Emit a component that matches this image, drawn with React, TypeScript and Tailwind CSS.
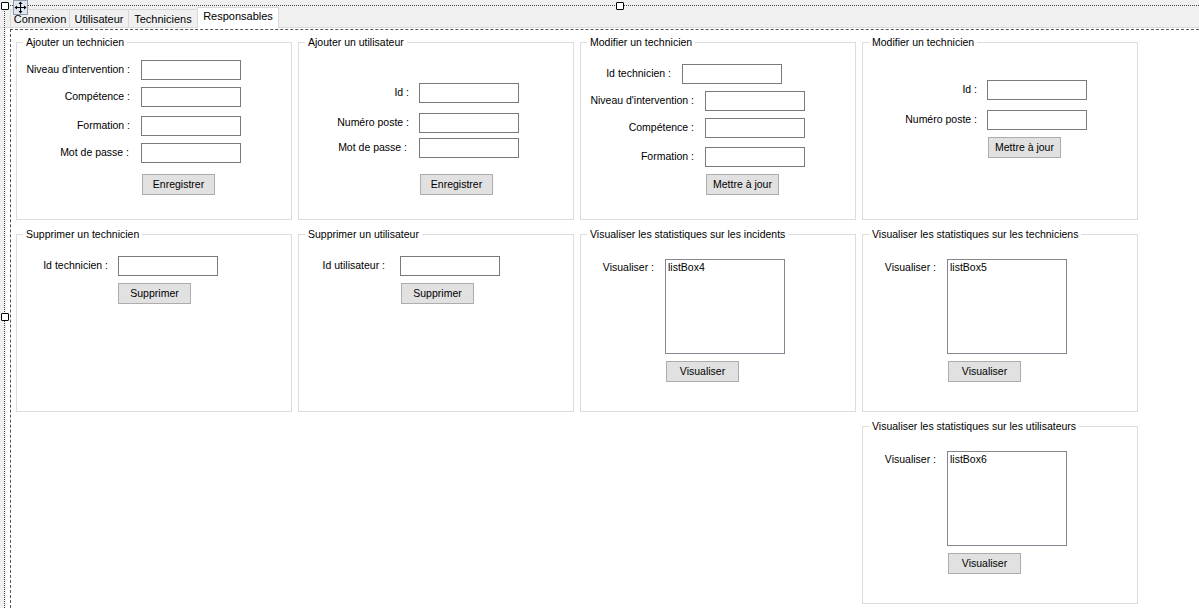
import React from 'react';

type GroupProps = { title: string; className?: string; children?: React.ReactNode };

const Group: React.FC<GroupProps> = ({ title, className = '', children }) => (
  <div className={`relative flex h-[178px] flex-col items-start border border-[#dcdcdc] ${className}`}>
    <span className="absolute -top-[7px] left-[6px] bg-white px-[3px] leading-[13px] whitespace-nowrap">{title}</span>
    {children}
  </div>
);

type FieldProps = { label: string; lw: string; gap: string; mt: string };

const Field: React.FC<FieldProps> = ({ label, lw, gap, mt }) => (
  <div className={`flex items-center ${mt}`}>
    <span className={`shrink-0 text-right whitespace-nowrap ${lw}`}>{label}</span>
    <div className={`h-[20px] w-[100px] shrink-0 border border-[#7a7a7a] bg-white ${gap}`} />
  </div>
);

const Btn: React.FC<{ className?: string; children: React.ReactNode }> = ({ className = '', children }) => (
  <button
    type="button"
    className={`flex h-[21px] w-[73px] items-center justify-center border border-[#adadad] bg-[#e1e1e1] leading-[13px] ${className}`}
  >
    {children}
  </button>
);

const ListView: React.FC<{ name: string }> = ({ name }) => (
  <>
    <div className="mt-[24px] flex items-start">
      <span className="mt-[1px] w-[73px] shrink-0 text-right whitespace-nowrap">Visualiser :</span>
      <div className="ml-[11px] h-[95px] w-[120px] border border-[#828790] bg-white px-[2px] pt-[1px] leading-[13px]">
        {name}
      </div>
    </div>
    <Btn className="ml-[85px] mt-[7px]">Visualiser</Btn>
  </>
);

const tabs = [
  { name: 'Connexion', w: 'w-[60px]' },
  { name: 'Utilisateur', w: 'w-[60px] -ml-px' },
  { name: 'Techniciens', w: 'w-[70px] -ml-px' },
];

const MoveGlyph = () => (
  <svg width="15" height="15" viewBox="0 0 15 15" className="absolute left-[13px] top-0">
    <rect x="0.5" y="0.5" width="14" height="14" fill="#dfe6ef" stroke="#8e9aab" />
    <path d="M7.5 2.5V12.5M2.5 7.5H12.5" stroke="#000" strokeWidth="1" />
    <path d="M7.5 1.5L9.5 4H5.5Z M7.5 13.5L9.5 11H5.5Z M1.5 7.5L4 5.5V9.5Z M13.5 7.5L11 5.5V9.5Z" fill="#000" />
  </svg>
);

const Handle: React.FC<{ className: string }> = ({ className }) => (
  <div className={`absolute h-[8px] w-[8px] rounded-[1px] border border-black bg-white ${className}`} />
);

export default function App() {
  return (
    <div className="relative flex h-[608px] w-[1199px] flex-col overflow-hidden bg-white font-['Liberation_Sans',Arial,sans-serif] text-[10.5px] text-black">
      {/* tab strip */}
      <div className="flex h-[28px] shrink-0 items-end border-b border-[#d9d9d9] bg-[#f0f0f0] pl-[10px] text-[11px]">
        {tabs.map((t) => (
          <div
            key={t.name}
            className={`flex h-[18px] items-center justify-center border border-b-0 border-[#d9d9d9] bg-[#f0f0f0] pt-[1px] leading-[13px] ${t.w}`}
          >
            {t.name}
          </div>
        ))}
        <div className="relative z-10 -mb-px -ml-px flex h-[21px] w-[82px] items-start justify-center border border-b-0 border-[#d9d9d9] bg-white pt-[2px] leading-[13px]">
          Responsables
        </div>
      </div>

      <div className="flex flex-1">
        <div className="w-[6px] shrink-0 bg-[#f0f0f0]" />
        {/* tab page */}
        <div className="ml-[4px] mt-[1px] flex-1 border-l border-t border-dashed border-[#555] pl-[5px] pt-[12px]">
          <div className="grid grid-cols-[repeat(4,276px)] grid-rows-[repeat(3,178px)] gap-x-[6px] gap-y-[14px]">
            <Group title="Ajouter un technicien">
              <Field label="Niveau d'intervention :" lw="w-[113px]" gap="ml-[11px]" mt="mt-[17px]" />
              <Field label="Compétence :" lw="w-[113px]" gap="ml-[11px]" mt="mt-[7px]" />
              <Field label="Formation :" lw="w-[113px]" gap="ml-[11px]" mt="mt-[9px]" />
              <Field label="Mot de passe :" lw="w-[112px]" gap="ml-[12px]" mt="mt-[7px]" />
              <Btn className="ml-[125px] mt-[11px]">Enregistrer</Btn>
            </Group>

            <Group title="Ajouter un utilisateur">
              <Field label="Id :" lw="w-[110px]" gap="ml-[10px]" mt="mt-[40px]" />
              <Field label="Numéro poste :" lw="w-[110px]" gap="ml-[10px]" mt="mt-[10px]" />
              <Field label="Mot de passe :" lw="w-[108px]" gap="ml-[12px]" mt="mt-[5px]" />
              <Btn className="ml-[121px] mt-[16px]">Enregistrer</Btn>
            </Group>

            <Group title="Modifier un technicien">
              <Field label="Id technicien :" lw="w-[90px]" gap="ml-[11px]" mt="mt-[21px]" />
              <Field label="Niveau d'intervention :" lw="w-[113px]" gap="ml-[11px]" mt="mt-[7px]" />
              <Field label="Compétence :" lw="w-[113px]" gap="ml-[11px]" mt="mt-[7px]" />
              <Field label="Formation :" lw="w-[113px]" gap="ml-[11px]" mt="mt-[9px]" />
              <Btn className="ml-[125px] mt-[7px]">Mettre à jour</Btn>
            </Group>

            <Group title="Modifier un technicien">
              <Field label="Id :" lw="w-[114px]" gap="ml-[10px]" mt="mt-[37px]" />
              <Field label="Numéro poste :" lw="w-[114px]" gap="ml-[10px]" mt="mt-[10px]" />
              <Btn className="ml-[125px] mt-[7px]">Mettre à jour</Btn>
            </Group>

            <Group title="Supprimer un technicien">
              <Field label="Id technicien :" lw="w-[91px]" gap="ml-[10px]" mt="mt-[21px]" />
              <Btn className="ml-[101px] mt-[7px]">Supprimer</Btn>
            </Group>

            <Group title="Supprimer un utilisateur">
              <Field label="Id utilisateur :" lw="w-[86px]" gap="ml-[15px]" mt="mt-[21px]" />
              <Btn className="ml-[102px] mt-[7px]">Supprimer</Btn>
            </Group>

            <Group title="Visualiser les statistiques sur les incidents">
              <ListView name="listBox4" />
            </Group>

            <Group title="Visualiser les statistiques sur les techniciens">
              <ListView name="listBox5" />
            </Group>

            <Group title="Visualiser les statistiques sur les utilisateurs" className="col-start-4">
              <ListView name="listBox6" />
            </Group>
          </div>
        </div>
      </div>

      {/* designer selection frame */}
      <div className="pointer-events-none absolute bottom-0 left-[4px] right-0 top-[5px] border-l border-t border-dotted border-[#444]" />
      <Handle className="left-[1px] top-[2px]" />
      <Handle className="left-[616px] top-[2px]" />
      <Handle className="left-[1px] top-[313px]" />
      <MoveGlyph />
    </div>
  );
}
